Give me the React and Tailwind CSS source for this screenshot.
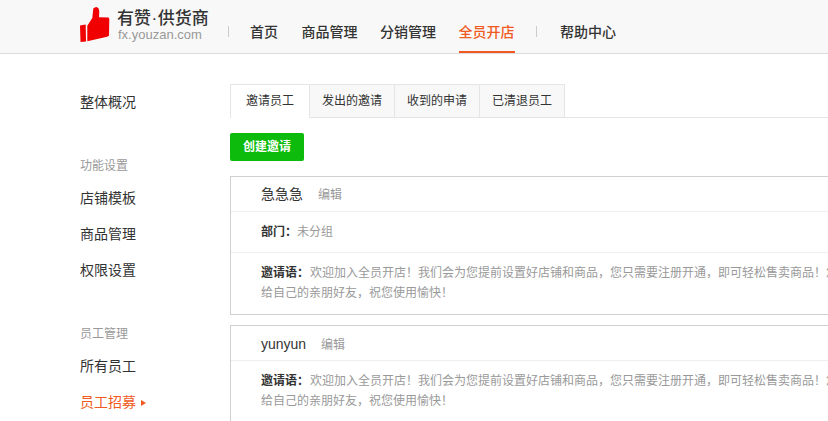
import React from "react";

const font = { fontFamily: '"Liberation Sans", "Noto Sans CJK SC", sans-serif' };

const invite =
  "欢迎加入全员开店！我们会为您提前设置好店铺和商品，您只需要注册开通，即可轻松售卖商品！您可以分享";

const SideLink = ({ children, active }) => (
  <div className={`h-[36px] leading-[36px] text-[14px] flex items-center ${active ? "text-[#f05a22]" : "text-[#333]"}`}>
    {children}
    {active && <span className="ml-[5px] mt-[1px] w-0 h-0 border-y-[3px] border-y-transparent border-l-[5px] border-l-[#f05a22]"></span>}
  </div>
);

const Message = () => (
  <div className="pl-[30px] pt-[10px] pb-[11px] text-[12px] leading-[20px] text-[#999] whitespace-nowrap">
    <span className="inline-block w-[49px] text-[#333] font-bold">邀请语：</span>
    {invite}
    <br />
    给自己的亲朋好友，祝您使用愉快！
  </div>
);

const App = () => {
  return (
    <div className="w-[828px] h-[421px] overflow-hidden bg-white" style={font}>
      {/* Header */}
      <div className="h-[54px] bg-[#f8f8f8] border-b border-[#dcdcdc] pl-[80px] flex">
        <svg width="30" height="36" viewBox="0 0 30 36" className="mt-[7px]">
          <path d="M0 18.5 L5.7 17.5 L6 34.5 L0.5 35 Z" fill="#f00000" />
          <path d="M7.3 18.7 L12.3 11 L13.3 1.5 Q14.5 0 16.7 0 Q19.3 1 19.3 4.3 L19 10.3 L28.5 10.5 Q29.3 11 29.3 12 L29 28.5 Q28 29.5 26 30 L7.3 34.3 Z" fill="#f00000" />
        </svg>
        <div className="ml-[7px] w-[93px] shrink-0">
          <div className="mt-[9px] text-[17px] leading-[20px] text-[#333] font-medium whitespace-nowrap">
            有赞<span className="mx-[0.5px]">·</span>供货商
          </div>
          <div className="-mt-[1px] ml-[1px] text-[13px] leading-[14px] text-[#999]">fx.youzan.com</div>
        </div>
        <div className="ml-[18px] mt-[26px] w-px h-[11px] bg-[#ccc]"></div>
        <div className="ml-[21px] flex gap-[22.5px] text-[14px] font-medium text-[#333] whitespace-nowrap">
          <div className="h-[53px] leading-[64px] mr-[1px]">首页</div>
          <div className="h-[53px] leading-[64px]">商品管理</div>
          <div className="h-[53px] leading-[64px]">分销管理</div>
          <div className="h-[53px] leading-[64px] text-[#f05a22] border-b-2 border-[#f05a22]">全员开店</div>
        </div>
        <div className="ml-[21.5px] mt-[26px] w-px h-[11px] bg-[#ccc]"></div>
        <div className="ml-[23px] h-[53px] leading-[64px] text-[14px] font-medium text-[#333] whitespace-nowrap">帮助中心</div>
      </div>

      <div className="flex">
        {/* Sidebar */}
        <div className="w-[150px] ml-[80px] shrink-0">
          <div className="mt-[30px]"><SideLink>整体概况</SideLink></div>
          <div className="mt-[37px] text-[12px] leading-[18px] text-[#999]">功能设置</div>
          <div className="mt-[5px]">
            <SideLink>店铺模板</SideLink>
            <SideLink>商品管理</SideLink>
            <SideLink>权限设置</SideLink>
          </div>
          <div className="mt-[37px] text-[12px] leading-[18px] text-[#999]">员工管理</div>
          <div className="mt-[5px]">
            <SideLink>所有员工</SideLink>
            <SideLink active>员工招募</SideLink>
          </div>
        </div>

        {/* Main */}
        <div className="w-[900px] shrink-0">
          <div className="mt-[30px] h-[34px] flex border-b border-[#e5e5e5] text-[12px] text-[#333]">
            <div className="w-[80px] h-[34px] leading-[33px] text-center bg-white border border-b-0 border-[#e5e5e5]">邀请员工</div>
            <div className="w-[85px] h-[33px] leading-[33px] text-center bg-[#f8f8f8] border-t border-r border-[#e5e5e5]">发出的邀请</div>
            <div className="w-[85px] h-[33px] leading-[33px] text-center bg-[#f8f8f8] border-t border-r border-[#e5e5e5]">收到的申请</div>
            <div className="w-[85px] h-[33px] leading-[33px] text-center bg-[#f8f8f8] border-t border-r border-[#e5e5e5]">已清退员工</div>
          </div>

          <button className="mt-[15px] block w-[74px] h-[28px] rounded-[2px] bg-[#0cbb0c] text-white text-[12px] font-bold">创建邀请</button>

          <div className="mt-[15px] border border-[#d0d0d0]">
            <div className="h-[35px] border-b border-[#eee] pl-[30px] flex items-center">
              <span className="text-[14px] text-[#333] w-[57px] mt-[1px]">急急急</span>
              <span className="text-[12px] text-[#999] mt-[2px]">编辑</span>
            </div>
            <div className="h-[41px] border-b border-[#eee] pl-[30px] pt-[10px] text-[12px] leading-[20px] text-[#999]">
              <span className="inline-block w-[36px] text-[#333] font-bold">部门：</span>未分组
            </div>
            <Message />
          </div>

          <div className="mt-[10px] border border-[#d0d0d0]">
            <div className="h-[35px] border-b border-[#eee] pl-[30px] flex items-center">
              <span className="text-[14px] text-[#333] w-[60px] mt-[3px]">yunyun</span>
              <span className="text-[12px] text-[#999] mt-[3px]">编辑</span>
            </div>
            <Message />
          </div>
        </div>
      </div>
    </div>
  );
};

export default App;
